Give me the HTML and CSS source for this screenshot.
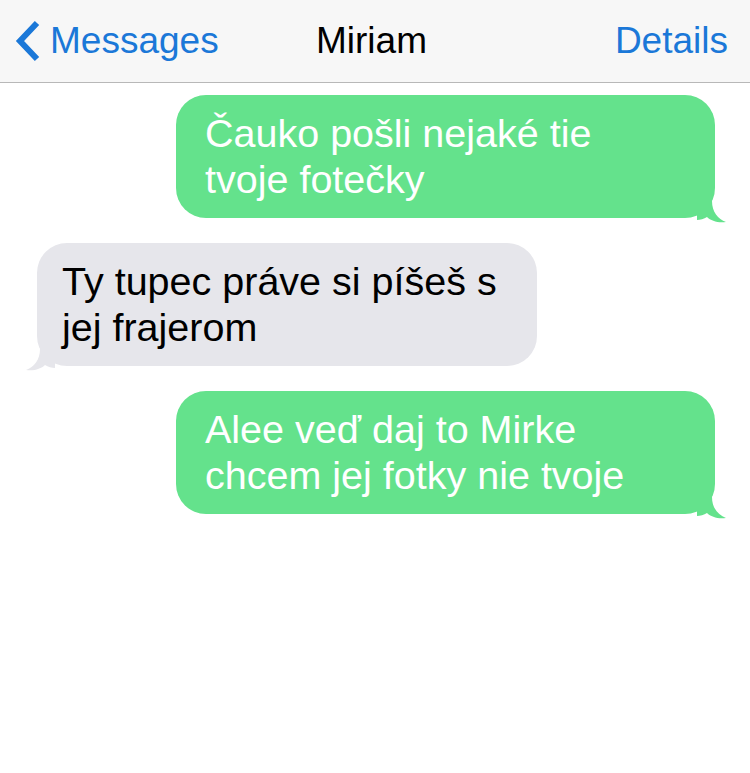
FILE: index.html
```html
<!DOCTYPE html>
<html lang="sk">
<head>
    <meta charset="UTF-8">
    <meta name="viewport" content="width=device-width, initial-scale=1.0">
    <title>Miriam</title>
    <link rel="stylesheet" href="styles.css">
</head>
<body>
    <header class="navbar">
        <a class="nav-back" href="#">
            <svg class="chevron" width="26" height="42" viewBox="0 0 26 42">
                <polyline points="22,3 5,21 22,39" fill="none" stroke="#1b78d8" stroke-width="6" stroke-linejoin="miter"/>
            </svg>
            <span>Messages</span>
        </a>
        <h1 class="nav-title">Miriam</h1>
        <a class="nav-details" href="#">Details</a>
    </header>
    <main class="chat">
        <div class="bubble out">
            Čauko pošli nejaké tie tvoje fotečky
            <svg class="tail" width="32" height="36" viewBox="0 0 32 36">
                <path d="M0 0 L15 0 L15 14 C15 25 21 32 29 35 C21 36 14 34 10 30 C7 32 3 33 0 33 Z" fill="#64e28c"/>
            </svg>
        </div>
        <div class="bubble in">
            Ty tupec práve si píšeš s jej frajerom
            <svg class="tail" width="32" height="36" viewBox="0 0 32 36">
                <path d="M32 0 L17 0 L17 14 C17 25 11 32 3 35 C11 36 18 34 22 30 C25 32 29 33 32 33 Z" fill="#e6e6eb"/>
            </svg>
        </div>
        <div class="bubble out">
            Alee veď daj to Mirke chcem jej fotky nie tvoje
            <svg class="tail" width="32" height="36" viewBox="0 0 32 36">
                <path d="M0 0 L15 0 L15 14 C15 25 21 32 29 35 C21 36 14 34 10 30 C7 32 3 33 0 33 Z" fill="#64e28c"/>
            </svg>
        </div>
    </main>
</body>
</html>
```

FILE: styles.css
```css
body {
    font-family: "Liberation Sans", Arial, sans-serif;
    margin: 0;
    padding: 0;
    background-color: #ffffff;
}
.navbar {
    height: 82px;
    display: grid;
    grid-template-columns: 1fr auto 1fr;
    align-items: center;
    padding: 0 22px 0 15px;
    background-color: #f7f7f7;
    border-bottom: 1px solid #b8b8b8;
    font-size: 37px;
}
.nav-back {
    display: flex;
    align-items: center;
    gap: 9px;
    color: #1b78d8;
    text-decoration: none;
    justify-self: start;
}
.chevron {
    display: block;
}
.nav-title {
    margin: 0;
    font-size: 37px;
    font-weight: normal;
    color: #000000;
}
.nav-details {
    justify-self: end;
    color: #1b78d8;
    text-decoration: none;
}
.chat {
    display: flex;
    flex-direction: column;
    gap: 25px;
    padding: 12px 0;
}
.bubble {
    position: relative;
    font-size: 39.5px;
    line-height: 46px;
    padding: 15px 40px 16px 29px;
    border-radius: 30px;
    box-sizing: border-box;
}
.bubble.out {
    align-self: flex-end;
    width: 539px;
    margin-right: 35px;
    background-color: #64e28c;
    color: #ffffff;
}
.bubble.in {
    align-self: flex-start;
    width: 500px;
    margin-left: 37px;
    padding-left: 25px;
    padding-right: 28px;
    background-color: #e6e6eb;
    color: #000000;
}
.tail {
    position: absolute;
    bottom: -5px;
}
.bubble.out .tail {
    right: -14px;
}
.bubble.in .tail {
    left: -14px;
}
```
